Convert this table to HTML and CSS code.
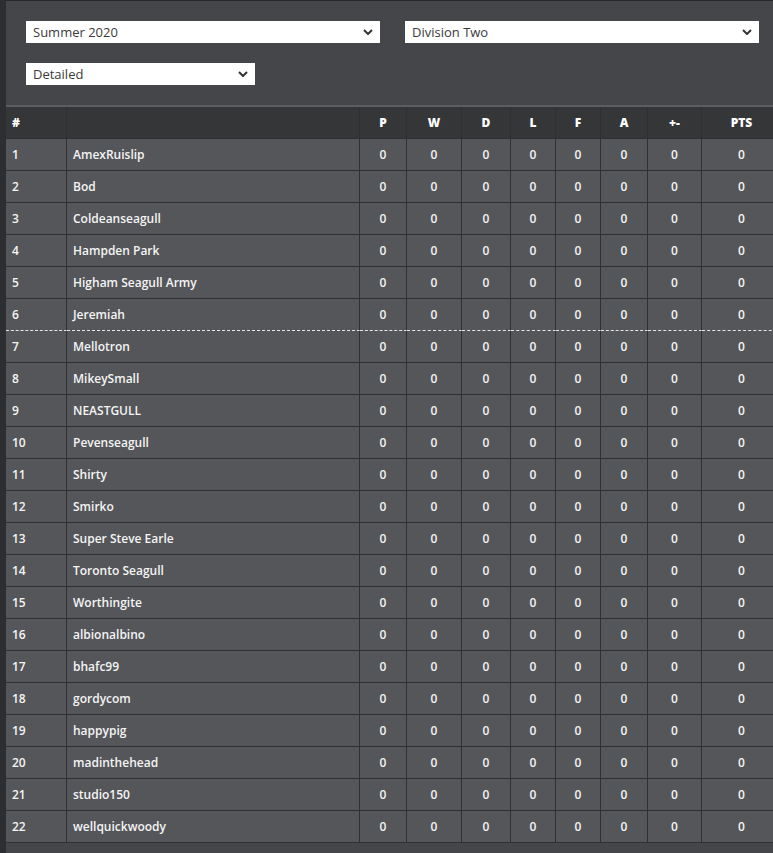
FILE: index.html
```html
<!DOCTYPE html>
<html>
<head>
<meta charset="utf-8">
<link rel="stylesheet" href="styles.css">
</head>
<body>
<div class="page">
  <div class="strip"></div>
  <div class="main">
    <div class="filters">
      <div class="filter-row">
        <label class="select wide">
          <select><option>Summer 2020</option></select>
          <svg class="chev" viewBox="0 0 10 6" width="10" height="6"><path d="M1 1 L5 5 L9 1" fill="none" stroke="#333" stroke-width="2"/></svg>
        </label>
        <label class="select wide">
          <select><option>Division Two</option></select>
          <svg class="chev" viewBox="0 0 10 6" width="10" height="6"><path d="M1 1 L5 5 L9 1" fill="none" stroke="#333" stroke-width="2"/></svg>
        </label>
      </div>
      <div class="filter-row">
        <label class="select narrow">
          <select><option>Detailed</option></select>
          <svg class="chev" viewBox="0 0 10 6" width="10" height="6"><path d="M1 1 L5 5 L9 1" fill="none" stroke="#333" stroke-width="2"/></svg>
        </label>
      </div>
    </div>
    <div class="table-wrap">
      <table class="league">
        <colgroup>
          <col class="c-pos"><col class="c-name"><col class="c-p"><col class="c-w"><col class="c-d"><col class="c-l"><col class="c-f"><col class="c-a"><col class="c-gd"><col class="c-pts">
        </colgroup>
        <thead>
          <tr><th class="left">#</th><th></th><th>P</th><th>W</th><th>D</th><th>L</th><th>F</th><th>A</th><th>+-</th><th>PTS</th></tr>
        </thead>
        <tbody>
          <tr><td class="left">1</td><td class="left">AmexRuislip</td><td>0</td><td>0</td><td>0</td><td>0</td><td>0</td><td>0</td><td>0</td><td>0</td></tr>
          <tr><td class="left">2</td><td class="left">Bod</td><td>0</td><td>0</td><td>0</td><td>0</td><td>0</td><td>0</td><td>0</td><td>0</td></tr>
          <tr><td class="left">3</td><td class="left">Coldeanseagull</td><td>0</td><td>0</td><td>0</td><td>0</td><td>0</td><td>0</td><td>0</td><td>0</td></tr>
          <tr><td class="left">4</td><td class="left">Hampden Park</td><td>0</td><td>0</td><td>0</td><td>0</td><td>0</td><td>0</td><td>0</td><td>0</td></tr>
          <tr><td class="left">5</td><td class="left">Higham Seagull Army</td><td>0</td><td>0</td><td>0</td><td>0</td><td>0</td><td>0</td><td>0</td><td>0</td></tr>
          <tr class="cutoff"><td class="left">6</td><td class="left">Jeremiah</td><td>0</td><td>0</td><td>0</td><td>0</td><td>0</td><td>0</td><td>0</td><td>0</td></tr>
          <tr><td class="left">7</td><td class="left">Mellotron</td><td>0</td><td>0</td><td>0</td><td>0</td><td>0</td><td>0</td><td>0</td><td>0</td></tr>
          <tr><td class="left">8</td><td class="left">MikeySmall</td><td>0</td><td>0</td><td>0</td><td>0</td><td>0</td><td>0</td><td>0</td><td>0</td></tr>
          <tr><td class="left">9</td><td class="left">NEASTGULL</td><td>0</td><td>0</td><td>0</td><td>0</td><td>0</td><td>0</td><td>0</td><td>0</td></tr>
          <tr><td class="left">10</td><td class="left">Pevenseagull</td><td>0</td><td>0</td><td>0</td><td>0</td><td>0</td><td>0</td><td>0</td><td>0</td></tr>
          <tr><td class="left">11</td><td class="left">Shirty</td><td>0</td><td>0</td><td>0</td><td>0</td><td>0</td><td>0</td><td>0</td><td>0</td></tr>
          <tr><td class="left">12</td><td class="left">Smirko</td><td>0</td><td>0</td><td>0</td><td>0</td><td>0</td><td>0</td><td>0</td><td>0</td></tr>
          <tr><td class="left">13</td><td class="left">Super Steve Earle</td><td>0</td><td>0</td><td>0</td><td>0</td><td>0</td><td>0</td><td>0</td><td>0</td></tr>
          <tr><td class="left">14</td><td class="left">Toronto Seagull</td><td>0</td><td>0</td><td>0</td><td>0</td><td>0</td><td>0</td><td>0</td><td>0</td></tr>
          <tr><td class="left">15</td><td class="left">Worthingite</td><td>0</td><td>0</td><td>0</td><td>0</td><td>0</td><td>0</td><td>0</td><td>0</td></tr>
          <tr><td class="left">16</td><td class="left">albionalbino</td><td>0</td><td>0</td><td>0</td><td>0</td><td>0</td><td>0</td><td>0</td><td>0</td></tr>
          <tr><td class="left">17</td><td class="left">bhafc99</td><td>0</td><td>0</td><td>0</td><td>0</td><td>0</td><td>0</td><td>0</td><td>0</td></tr>
          <tr><td class="left">18</td><td class="left">gordycom</td><td>0</td><td>0</td><td>0</td><td>0</td><td>0</td><td>0</td><td>0</td><td>0</td></tr>
          <tr><td class="left">19</td><td class="left">happypig</td><td>0</td><td>0</td><td>0</td><td>0</td><td>0</td><td>0</td><td>0</td><td>0</td></tr>
          <tr><td class="left">20</td><td class="left">madinthehead</td><td>0</td><td>0</td><td>0</td><td>0</td><td>0</td><td>0</td><td>0</td><td>0</td></tr>
          <tr><td class="left">21</td><td class="left">studio150</td><td>0</td><td>0</td><td>0</td><td>0</td><td>0</td><td>0</td><td>0</td><td>0</td></tr>
          <tr><td class="left">22</td><td class="left">wellquickwoody</td><td>0</td><td>0</td><td>0</td><td>0</td><td>0</td><td>0</td><td>0</td><td>0</td></tr>
        </tbody>
      </table>
    </div>
  </div>
</div>
</body>
</html>
```
FILE: styles.css
```css
html, body {
  margin: 0;
  padding: 0;
  background: #45464a;
  overflow: hidden;
  font-family: "Open Sans", "Liberation Sans", sans-serif;
}
.page {
  display: flex;
  min-height: 853px;
}
.strip {
  width: 6px;
  flex: 0 0 6px;
  background: #2d2e31;
}
.main {
  flex: 1;
  min-width: 0;
  background: #45464a;
  border-top: 1px solid #27282b;
  overflow: hidden;
}
.filters {
  padding: 20px 0 20px 20px;
  display: flex;
  flex-direction: column;
  gap: 20px;
}
.filter-row {
  display: flex;
  gap: 25px;
}
.select {
  position: relative;
  display: block;
  height: 22px;
}
.select.wide { width: 354px; }
.select.narrow { width: 229px; }
.select select {
  -webkit-appearance: none;
  appearance: none;
  display: block;
  width: 100%;
  height: 22px;
  margin: 0;
  border: 0;
  border-radius: 0;
  background: #ffffff;
  padding: 0 20px 0 7px;
  font-family: "Open Sans", "Liberation Sans", sans-serif;
  font-size: 13px;
  color: #3a3a3a;
  outline: none;
}
.chev {
  position: absolute;
  right: 7px;
  top: 8px;
  pointer-events: none;
}
.table-wrap {
  border-top: 2px solid #5c5d61;
  width: 776px;
}
.league {
  table-layout: fixed;
  border-collapse: separate;
  border-spacing: 0;
  width: 776px;
  color: #f4f4f4;
  font-size: 12px;
}
.c-pos { width: 61px; }
.c-name { width: 293px; }
.c-p { width: 47px; }
.c-w { width: 55px; }
.c-d { width: 49px; }
.c-l { width: 45px; }
.c-f { width: 45px; }
.c-a { width: 47px; }
.c-gd { width: 54px; }
.c-pts { width: 80px; }
.league th,
.league td {
  padding: 0 6px;
  height: 31px;
  line-height: 31px;
  text-align: center;
  border-right: 1px solid #2f3033;
  border-bottom: 1px solid #2f3033;
  white-space: nowrap;
  overflow: hidden;
}
.league td {
  background: #55565a;
  font-weight: 600;
}
.league th {
  background: #353638;
  font-weight: 800;
  font-size: 12px;
  color: #ffffff;
}
.league .left {
  text-align: left;
}
.league tr.cutoff td {
  border-bottom: 1px dashed #e6e6e6;
}
```
